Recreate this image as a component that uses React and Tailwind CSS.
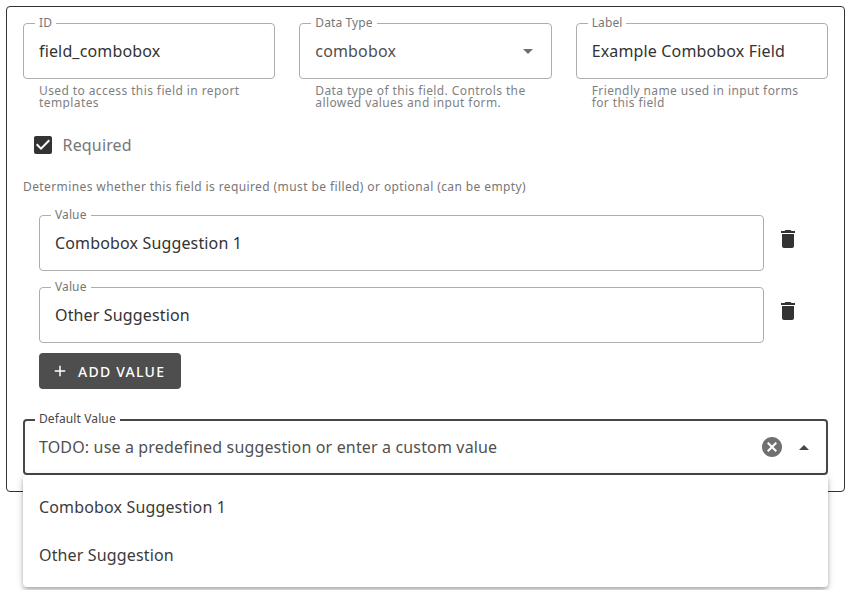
import React from "react";

const paths = {
  checkbox:
    "M10,17L5,12L6.41,10.58L10,14.17L17.59,6.58L19,8M19,3H5C3.89,3 3,3.89 3,5V19A2,2 0 0,0 5,21H19A2,2 0 0,0 21,19V5C21,3.89 20.1,3 19,3Z",
  trash: "M19,4H15.5L14.5,3H9.5L8.5,4H5V6H19M6,19A2,2 0 0,0 8,21H16A2,2 0 0,0 18,19V7H6V19Z",
  plus: "M19,13H13V19H11V13H5V11H11V5H13V11H19V13Z",
  down: "M7,10L12,15L17,10H7Z",
  up: "M7,15L12,10L17,15H7Z",
  clear:
    "M12,2C17.53,2 22,6.47 22,12C22,17.53 17.53,22 12,22C6.47,22 2,17.53 2,12C2,6.47 6.47,2 12,2M15.59,7L12,10.59L8.41,7L7,8.41L10.59,12L7,15.59L8.41,17L12,13.41L15.59,17L17,15.59L13.41,12L17,8.41L15.59,7Z",
};

function Icon({ name, className = "size-6" }) {
  return (
    <svg viewBox="0 0 24 24" fill="currentColor" className={`shrink-0 ${className}`}>
      <path d={paths[name]} />
    </svg>
  );
}

function Field({ label, value, valueClass = "text-[#333]", active = false, children }) {
  return (
    <div
      className={`relative flex h-14 items-center rounded ${
        active ? "border-2 border-[#474747] pl-3.5 pr-2.5" : "border border-[#adadad] pl-[15px] pr-[11px]"
      }`}
    >
      <span
        className={`absolute bg-white px-1 text-xs leading-4 tracking-[0.11px] ${
          active ? "-top-[10px] left-[10px] text-[#474747]" : "-top-[9px] left-[11px] text-[#777]"
        }`}
      >
        {label}
      </span>
      <span className={`grow whitespace-nowrap text-base tracking-[0.15px] ${valueClass}`}>{value}</span>
      {children}
    </div>
  );
}

function Hint({ children }) {
  return (
    <div className="mt-1.5 h-6 overflow-hidden px-4 text-xs leading-3 tracking-[0.4px] text-[#7f7f7f]">
      {children}
    </div>
  );
}

function ValueRow({ value }) {
  return (
    <div className="flex gap-3">
      <div className="w-[725px]">
        <Field label="Value" value={value} />
      </div>
      <button className="mt-3 size-6 text-[#333]">
        <Icon name="trash" />
      </button>
    </div>
  );
}

export default function App() {
  return (
    <div className="h-[590px] w-[851px] overflow-hidden bg-white p-1.5 font-['Noto_Sans',sans-serif]">
      <div className="h-[486px] w-[839px] rounded border border-[#333] p-4">
        <div className="grid grid-cols-3 gap-6">
          <div>
            <Field label="ID" value="field_combobox" />
            <Hint>Used to access this field in report templates</Hint>
          </div>
          <div>
            <Field label="Data Type" value="combobox" valueClass="text-[#505050]">
              <Icon name="down" className="size-6 text-[#707070]" />
            </Field>
            <Hint>Data type of this field. Controls the allowed values and input form.</Hint>
          </div>
          <div>
            <Field label="Label" value="Example Combobox Field" />
            <Hint>Friendly name used in input forms for this field</Hint>
          </div>
        </div>

        <div className="mt-6 flex h-6 items-center gap-2 pl-[7.6px]">
          <Icon name="checkbox" className="size-6 text-[#333]" />
          <span className="text-base tracking-[0.15px] text-[#777]">Required</span>
        </div>
        <p className="mt-[22px] text-xs leading-4 tracking-[0.4px] text-[#777]">
          Determines whether this field is required (must be filled) or optional (can be empty)
        </p>

        <div className="mt-5 flex flex-col gap-4 pl-4">
          <ValueRow value="Combobox Suggestion 1" />
          <ValueRow value="Other Suggestion" />
        </div>
        <button className="ml-4 mt-2.5 flex h-9 w-[142px] items-center rounded bg-[#4e4e4e] pl-3 text-sm font-medium tracking-[1.25px] text-white">
          <Icon name="plus" className="mr-[9px] size-[18px]" />
          <span className="pt-0.5">ADD VALUE</span>
        </button>

        <div className="relative mt-[30px]">
          <Field
            active
            label="Default Value"
            value="TODO: use a predefined suggestion or enter a custom value"
            valueClass="text-[#505050]"
          >
            <Icon name="clear" className="mr-2 size-6 text-[#707070]" />
            <Icon name="up" className="size-6 text-[#474747]" />
          </Field>
          <div className="absolute left-0 top-full w-full rounded bg-white py-2 text-base tracking-[0.15px] text-[#3b3b3b] shadow-[0_2px_4px_-1px_rgba(0,0,0,0.2),0_4px_5px_0_rgba(0,0,0,0.14),0_1px_10px_0_rgba(0,0,0,0.12)]">
            <div className="flex h-12 items-center px-4">Combobox Suggestion 1</div>
            <div className="flex h-12 items-center px-4">Other Suggestion</div>
          </div>
        </div>
      </div>
    </div>
  );
}
